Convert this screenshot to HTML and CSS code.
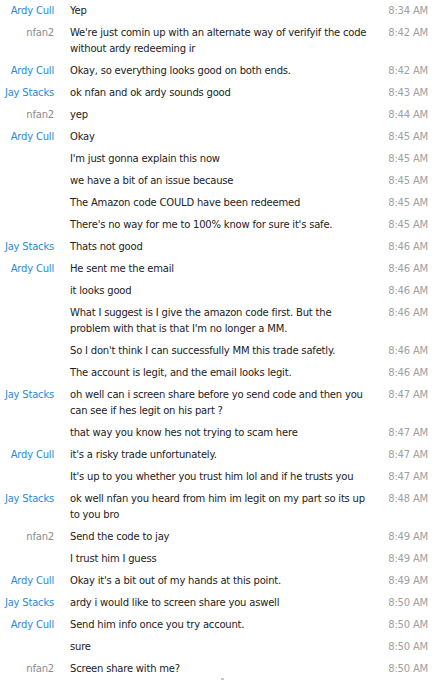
FILE: index.html
```html
<!DOCTYPE html>
<html>
<head>
<meta charset="utf-8">
<link rel="stylesheet" href="styles.css">
</head>
<body>
<div class="chat">
  <div class="row"><div class="name blue">Ardy Cull</div><div class="msg">Yep</div><div class="time">8:34 AM</div></div>
  <div class="row"><div class="name gray">nfan2</div><div class="msg">We're just comin up with an alternate way of verifyif the code without ardy redeeming ir</div><div class="time">8:42 AM</div></div>
  <div class="row"><div class="name blue">Ardy Cull</div><div class="msg">Okay, so everything looks good on both ends.</div><div class="time">8:42 AM</div></div>
  <div class="row"><div class="name blue">Jay Stacks</div><div class="msg">ok nfan and ok ardy sounds good</div><div class="time">8:43 AM</div></div>
  <div class="row"><div class="name gray">nfan2</div><div class="msg">yep</div><div class="time">8:44 AM</div></div>
  <div class="row"><div class="name blue">Ardy Cull</div><div class="msg">Okay</div><div class="time">8:45 AM</div></div>
  <div class="row"><div class="name"></div><div class="msg">I'm just gonna explain this now</div><div class="time">8:45 AM</div></div>
  <div class="row"><div class="name"></div><div class="msg">we have a bit of an issue because</div><div class="time">8:45 AM</div></div>
  <div class="row"><div class="name"></div><div class="msg">The Amazon code COULD have been redeemed</div><div class="time">8:45 AM</div></div>
  <div class="row"><div class="name"></div><div class="msg">There's no way for me to 100% know for sure it's safe.</div><div class="time">8:45 AM</div></div>
  <div class="row"><div class="name blue">Jay Stacks</div><div class="msg">Thats not good</div><div class="time">8:46 AM</div></div>
  <div class="row"><div class="name blue">Ardy Cull</div><div class="msg">He sent me the email</div><div class="time">8:46 AM</div></div>
  <div class="row"><div class="name"></div><div class="msg">it looks good</div><div class="time">8:46 AM</div></div>
  <div class="row"><div class="name"></div><div class="msg">What I suggest is I give the amazon code first. But the problem with that is that I'm no longer a MM.</div><div class="time">8:46 AM</div></div>
  <div class="row"><div class="name"></div><div class="msg">So I don't think I can successfully MM this trade safetly.</div><div class="time">8:46 AM</div></div>
  <div class="row"><div class="name"></div><div class="msg">The account is legit, and the email looks legit.</div><div class="time">8:46 AM</div></div>
  <div class="row"><div class="name blue">Jay Stacks</div><div class="msg">oh well can i screen share before yo send code and then you can see if hes legit on his part ?</div><div class="time">8:47 AM</div></div>
  <div class="row"><div class="name"></div><div class="msg">that way you know hes not trying to scam here</div><div class="time">8:47 AM</div></div>
  <div class="row"><div class="name blue">Ardy Cull</div><div class="msg">it's a risky trade unfortunately.</div><div class="time">8:47 AM</div></div>
  <div class="row"><div class="name"></div><div class="msg">It's up to you whether you trust him lol and if he trusts you</div><div class="time">8:47 AM</div></div>
  <div class="row"><div class="name blue">Jay Stacks</div><div class="msg">ok well nfan you heard from him im legit on my part so its up to you bro</div><div class="time">8:48 AM</div></div>
  <div class="row"><div class="name gray">nfan2</div><div class="msg">Send the code to jay</div><div class="time">8:49 AM</div></div>
  <div class="row"><div class="name"></div><div class="msg">I trust him I guess</div><div class="time">8:49 AM</div></div>
  <div class="row"><div class="name blue">Ardy Cull</div><div class="msg">Okay it's a bit out of my hands at this point.</div><div class="time">8:49 AM</div></div>
  <div class="row"><div class="name blue">Jay Stacks</div><div class="msg">ardy i would like to screen share you aswell</div><div class="time">8:50 AM</div></div>
  <div class="row"><div class="name blue">Ardy Cull</div><div class="msg">Send him info once you try account.</div><div class="time">8:50 AM</div></div>
  <div class="row"><div class="name"></div><div class="msg">sure</div><div class="time">8:50 AM</div></div>
  <div class="row"><div class="name gray">nfan2</div><div class="msg">Screen share with me?</div><div class="time">8:50 AM</div></div>
</div>
<div class="dot"></div>
</body>
</html>
```
FILE: styles.css
```css
html, body {
  margin: 0;
  padding: 0;
  background: #ffffff;
}
body {
  font-family: "DejaVu Sans", Verdana, sans-serif;
  font-size: 10px;
  letter-spacing: -0.2px;
  color: #333333;
  width: 439px;
  height: 685px;
  overflow: hidden;
}
.chat {
  display: flex;
  flex-direction: column;
  padding-right: 11px;
}
.row {
  display: grid;
  grid-template-columns: 54px 302px 1fr;
  column-gap: 16px;
  padding: 3px 0;
  line-height: 16px;
}
.name {
  text-align: right;
  white-space: nowrap;
}
.blue { color: #2b8ad3; }
.gray { color: #8c8c8c; }
.msg {
  color: #222222;
}
.time {
  text-align: right;
  color: #a0a0a0;
  white-space: nowrap;
}
.dot {
  width: 3px;
  height: 2px;
  background: #c8c8c8;
  margin: -2px 0 0 221px;
}
```
